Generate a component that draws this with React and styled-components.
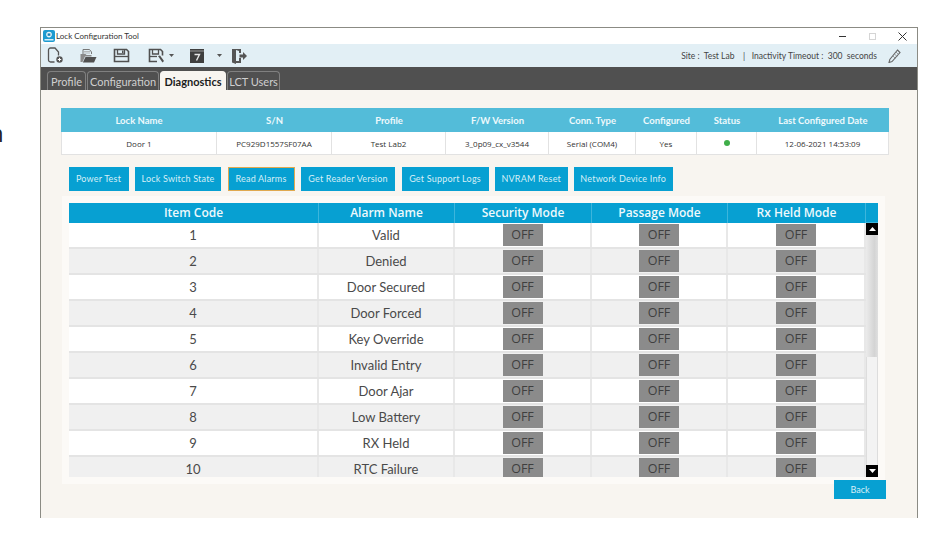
import React from 'react'
import styled, { createGlobalStyle } from 'styled-components'

const GlobalStyle = createGlobalStyle`
  html, body {
    margin: 0;
    background: #fff;
    font-family: "Open Sans", "Noto Sans", sans-serif;
  }
`

const Page = styled.div`
  position: relative;
  width: 951px;
  height: 542px;
  padding: 27px 0 0 40px;
  box-sizing: border-box;
  overflow: hidden;
`

const CutOffLetter = styled.span`
  position: absolute;
  left: -11px;
  top: 118px;
  font-size: 24px;
  line-height: 30px;
  color: #222;
`

const Window = styled.div`
  width: 878px;
  height: 491px;
  box-sizing: border-box;
  border: 1px solid #8b8b84;
  border-bottom: 0;
  display: flex;
  flex-direction: column;
`

const TitleBar = styled.div`
  height: 16px;
  display: flex;
  align-items: center;
  padding-left: 2px;
  background: #fff;
  font-family: Lato, sans-serif;
  font-size: 8px;
  color: #333;
`

const TitleText = styled.span`
  margin-left: 1px;
  flex: 1;
`

const WindowButton = styled.span`
  display: flex;
  justify-content: center;
  width: 30px;
  color: ${props => props.dim ? '#ccc' : '#333'};
`

const Toolbar = styled.div`
  height: 23px;
  display: flex;
  align-items: center;
  padding-left: 6px;
  background: #e2eff5;
`

const ToolIcon = styled.svg`
  display: block;
  flex: none;
  margin-right: ${props => props.gap || 0}px;
`

const SiteInfo = styled.div`
  margin-left: auto;
  display: flex;
  align-items: center;
  font-family: Lato, sans-serif;
  font-size: 8.5px;
  color: #444;
  white-space: pre;
`

const Pencil = styled.svg`
  display: block;
  margin: 0 16px 0 11px;
`

const TabBar = styled.div`
  height: 23px;
  display: flex;
  align-items: flex-end;
  padding-left: 6px;
  gap: 1px;
  background: #505050;
`

const Tab = styled.div`
  height: 19px;
  width: ${props => props.width}px;
  box-sizing: border-box;
  display: flex;
  align-items: center;
  justify-content: center;
  border: 1px solid ${props => props.active ? '#f8f5f0' : '#808080'};
  border-bottom: 0;
  border-radius: 4px 4px 0 0;
  background: ${props => props.active ? '#f8f5f0' : '#505050'};
  color: ${props => props.active ? '#1c1c1c' : '#cfcfcf'};
  font-family: Lato, sans-serif;
  font-size: 11px;
  font-weight: ${props => props.active ? 700 : 400};
  white-space: nowrap;
`

const Content = styled.div`
  flex: 1;
  padding: 18px 0 0 20px;
  background: #f8f5f0;
`

const InfoTable = styled.div`
  width: 828px;
  display: grid;
  grid-template-columns: 156px 115px 114px 103px 87px 61px 60px 132px;
`

const InfoHead = styled.div`
  height: 24px;
  display: flex;
  align-items: center;
  justify-content: center;
  background: #53bcd9;
  color: #eef9fc;
  font-family: Lato, sans-serif;
  font-size: 9.5px;
  font-weight: 700;
`

const InfoCell = styled.div`
  height: 23px;
  box-sizing: border-box;
  display: flex;
  align-items: center;
  justify-content: center;
  background: #fff;
  border-right: 1px solid #e2e2e2;
  border-bottom: 1px solid #e2e2e2;
  &:nth-child(9) {
    border-left: 1px solid #e2e2e2;
  }
  color: #333;
  font-size: 8px;
`

const StatusDot = styled.span`
  width: 6px;
  height: 6px;
  border-radius: 50%;
  background: #3fae49;
`

const ActionRow = styled.div`
  display: flex;
  gap: 6.5px;
  margin: 11.5px 0 0 7.5px;
`

const ActionButton = styled.button`
  height: 24px;
  width: ${props => props.width}px;
  padding: 0;
  box-sizing: border-box;
  background: #07a0d2;
  border: 1px solid ${props => props.active ? '#e0a94f' : '#07a0d2'};
  border-radius: 0;
  color: #d6eff7;
  font-family: Lato, sans-serif;
  font-size: 9px;
  letter-spacing: 0.2px;
  white-space: nowrap;
`

const AlarmPanel = styled.div`
  margin: 12px 0 0 8px;
  width: 809px;
  height: 274px;
  display: flex;
  overflow: hidden;
  box-shadow: 0 0 0 7px #fcfaf7;
`

const AlarmTable = styled.div`
  width: 797px;
`

const AlarmRow = styled.div`
  display: grid;
  grid-template-columns: 250px 136px 137px 136px 138px;
  height: ${props => props.head ? 20 : 26}px;
  box-sizing: border-box;
  background: ${props => props.head ? '#07a0d2' : props.shaded ? '#f0f0f0' : '#fff'};
  border-bottom: ${props => props.head ? 0 : '2px solid #e4e4e4'};
`

const AlarmHead = styled.div`
  display: flex;
  align-items: center;
  justify-content: center;
  border-right: 1px solid #3db5dc;
  color: #eef9fc;
  font-size: 12px;
  font-weight: 600;
`

const AlarmCell = styled.div`
  display: flex;
  align-items: center;
  justify-content: center;
  border-right: 2px solid #e8e8e8;
  color: #4a4a4a;
  font-family: Lato, sans-serif;
  font-size: 13px;
`

const OffBadge = styled.span`
  width: 40px;
  height: 22px;
  display: flex;
  align-items: center;
  justify-content: center;
  background: #8b8b8b;
  color: #3f3f3f;
  font-family: "Open Sans", sans-serif;
  font-size: 12.5px;
`

const ScrollBar = styled.div`
  width: 13px;
  display: flex;
  flex-direction: column;
  height: 274px;
`

const ScrollCap = styled.div`
  height: 20px;
  background: #07a0d2;
  border-bottom: 1px solid #3db5dc;
  box-sizing: border-box;
`

const ScrollArrow = styled.div`
  height: 12px;
  display: flex;
  align-items: center;
  justify-content: center;
  background: #000;
  color: #fff;
`

const ScrollThumb = styled.div`
  height: 122px;
  background: linear-gradient(90deg, #ebebeb, #d4d4d4 70%, #dfdfdf);
`

const ScrollTrack = styled.div`
  flex: 1;
  background: #f3f3f3;
  border-left: 1px solid #ddd;
  border-right: 1px solid #ddd;
`

const BackRow = styled.div`
  display: flex;
  justify-content: flex-end;
  width: 825px;
  margin-top: 3px;
`

const BackButton = styled.button`
  width: 52px;
  height: 19px;
  padding: 0;
  background: #07a0d2;
  border: 0;
  color: #d6eff7;
  font-family: Lato, sans-serif;
  font-size: 9px;
`

const infoColumns = ['Lock Name', 'S/N', 'Profile', 'F/W Version', 'Conn. Type', 'Configured', 'Status', 'Last Configured Date']
const infoValues = ['Door 1', 'PC929D1557SF07AA', 'Test Lab2', '3_0p09_cx_v3544', 'Serial (COM4)', 'Yes', null, '12-06-2021 14:53:09']
const actions = [
  ['Power Test', 60],
  ['Lock Switch State', 86],
  ['Read Alarms', 67],
  ['Get Reader Version', 94],
  ['Get Support Logs', 87],
  ['NVRAM Reset', 72.5],
  ['Network Device Info', 98.5],
]
const alarmColumns = ['Item Code', 'Alarm Name', 'Security Mode', 'Passage Mode', 'Rx Held Mode']
const alarms = ['Valid', 'Denied', 'Door Secured', 'Door Forced', 'Key Override', 'Invalid Entry', 'Door Ajar', 'Low Battery', 'RX Held', 'RTC Failure']

const Logo = () => (
  <ToolIcon width="12" height="12" viewBox="0 0 12 12" aria-hidden="true">
    <rect width="12" height="12" rx="2" fill="#1c9ad0" />
    <circle cx="6" cy="4.6" r="2.8" fill="#e8f6fb" />
    <rect x="4.6" y="3.4" width="2.8" height="2.4" fill="#1c7fb0" />
    <rect x="1.5" y="9" width="9" height="1.5" fill="#d3eef8" />
  </ToolIcon>
)

const NewIcon = () => (
  <ToolIcon width="17" height="17" viewBox="0 0 17 17" gap={16} aria-hidden="true">
    <path d="M7.500 15H3.500a2 2 0 0 1-2-2V3a2 2 0 0 1 2-2h4.500l3.500 4v3.500" fill="none" stroke="#555" strokeWidth="1.300" />
    <circle cx="12.500" cy="12.500" r="3.200" fill="#555" />
    <path d="M10.800 12.500h3.400M12.500 10.800v3.400" stroke="#fff" strokeWidth="1" />
  </ToolIcon>
)

const OpenIcon = () => (
  <ToolIcon width="17" height="17" viewBox="0 0 17 17" gap={16} aria-hidden="true">
    <path d="M3 7V2.500h6.500L11.500 5v2" fill="none" stroke="#777" strokeWidth="1" />
    <path d="M4 4.500h6M4 6h6" stroke="#aaa" strokeWidth="0.8" />
    <path d="M.5 7h5l1 1h5v1.500H5L2.500 15H.5z" fill="#8a8a8a" />
    <path d="M5.500 10h11L14 15.500H2.800z" fill="#505050" />
  </ToolIcon>
)

const SaveIcon = () => (
  <ToolIcon width="17" height="17" viewBox="0 0 17 17" gap={18} aria-hidden="true">
    <path d="M1.500 2.500h12l2 2v10h-14z" fill="none" stroke="#505050" strokeWidth="1.600" />
    <path d="M4.500 3v4h7V3" fill="none" stroke="#505050" strokeWidth="1.300" />
    <path d="M9 3.500h1.500v2.500H9z" fill="#505050" />
    <path d="M2 9.500h13" stroke="#505050" strokeWidth="1.300" />
  </ToolIcon>
)

const SaveAsIcon = () => (
  <ToolIcon width="17" height="17" viewBox="0 0 17 17" gap={4} aria-hidden="true">
    <path d="M9 14.500H1.500v-12h11l2 2v4" fill="none" stroke="#505050" strokeWidth="1.600" />
    <path d="M4.500 3v4h6V3" fill="none" stroke="#505050" strokeWidth="1.300" />
    <path d="M2 9.500h7" stroke="#505050" strokeWidth="1.300" />
    <path d="M10 9l2-.5L16 14l-1.500 1.500z" fill="#505050" />
  </ToolIcon>
)

const DropArrow = ({ gap }) => (
  <ToolIcon width="5" height="3" viewBox="0 0 5 3" gap={gap} aria-hidden="true">
    <path d="M0 0h5L2.500 3z" fill="#555" />
  </ToolIcon>
)

const HelpIcon = () => (
  <ToolIcon width="14" height="14" viewBox="0 0 14 14" gap={13} aria-hidden="true">
    <rect width="14" height="14" fill="#3f3f3f" />
    <rect y="1.500" width="14" height="1" fill="#9a9a9a" />
    <path d="M4.500 5.500h5L6.500 11.500" fill="none" stroke="#e6e6e6" strokeWidth="1.400" />
  </ToolIcon>
)

const ExitIcon = () => (
  <ToolIcon width="16" height="16" viewBox="0 0 16 16" aria-hidden="true">
    <path d="M1 1h9v4H8V3L5 2v11h3v-3h2v5H5v1l-4-1.500z" fill="#555" />
    <path d="M8.500 6.500H12V4l4 4-4 4V9.500H8.500z" fill="#555" />
  </ToolIcon>
)

const CloseGlyph = () => (
  <svg width="9" height="9" viewBox="0 0 9 9" aria-hidden="true">
    <path d="M.5.5l8 8M8.500.5l-8 8" stroke="#333" strokeWidth="1" />
  </svg>
)

const MinGlyph = () => (
  <svg width="9" height="9" viewBox="0 0 9 9" aria-hidden="true">
    <path d="M1 4.500h7" stroke="#333" strokeWidth="1" />
  </svg>
)

const MaxGlyph = () => (
  <svg width="7" height="7" viewBox="0 0 7 7" aria-hidden="true">
    <rect x=".5" y=".5" width="6" height="6" fill="none" stroke="#d5d5d5" />
  </svg>
)

const App = () => (
  <Page>
    <GlobalStyle />
    <CutOffLetter>n</CutOffLetter>
    <Window>
      <TitleBar>
        <Logo />
        <TitleText>Lock Configuration Tool</TitleText>
        <WindowButton><MinGlyph /></WindowButton>
        <WindowButton dim><MaxGlyph /></WindowButton>
        <WindowButton><CloseGlyph /></WindowButton>
      </TitleBar>
      <Toolbar>
        <NewIcon />
        <OpenIcon />
        <SaveIcon />
        <SaveAsIcon />
        <DropArrow gap={16} />
        <HelpIcon />
        <DropArrow gap={9} />
        <ExitIcon />
        <SiteInfo>
          Site :  Test Lab    |   Inactivity Timeout :  300  seconds
          <Pencil width="13" height="14" viewBox="0 0 13 14" aria-hidden="true">
            <path d="M9.500 1L12 3.500 4 12.500 1 13.500l.8-3z" fill="none" stroke="#666" strokeWidth="1.100" />
            <path d="M8 3l2.500 2.500M6.500 5L9 7.500M5 7l2.500 2.500" stroke="#888" strokeWidth="0.800" />
          </Pencil>
        </SiteInfo>
      </Toolbar>
      <TabBar>
        <Tab width={39}>Profile</Tab>
        <Tab width={72}>Configuration</Tab>
        <Tab width={66} active>Diagnostics</Tab>
        <Tab width={53}>LCT Users</Tab>
      </TabBar>
      <Content>
        <InfoTable>
          {infoColumns.map(name => <InfoHead key={name}>{name}</InfoHead>)}
          {infoValues.map((value, i) => (
            <InfoCell key={i}>{value || <StatusDot />}</InfoCell>
          ))}
        </InfoTable>
        <ActionRow>
          {actions.map(([label, width]) => (
            <ActionButton key={label} width={width} active={label === 'Read Alarms'}>{label}</ActionButton>
          ))}
        </ActionRow>
        <AlarmPanel>
          <AlarmTable>
            <AlarmRow head>
              {alarmColumns.map(name => <AlarmHead key={name}>{name}</AlarmHead>)}
            </AlarmRow>
            {alarms.map((name, i) => (
              <AlarmRow key={name} shaded={i % 2 === 1}>
                <AlarmCell>{i + 1}</AlarmCell>
                <AlarmCell>{name}</AlarmCell>
                <AlarmCell><OffBadge>OFF</OffBadge></AlarmCell>
                <AlarmCell><OffBadge>OFF</OffBadge></AlarmCell>
                <AlarmCell><OffBadge>OFF</OffBadge></AlarmCell>
              </AlarmRow>
            ))}
          </AlarmTable>
          <ScrollBar>
            <ScrollCap />
            <ScrollArrow>
              <svg width="7" height="4" viewBox="0 0 7 4" aria-hidden="true"><path d="M3.500 0L7 4H0z" fill="#fff" /></svg>
            </ScrollArrow>
            <ScrollThumb />
            <ScrollTrack />
            <ScrollArrow>
              <svg width="7" height="4" viewBox="0 0 7 4" aria-hidden="true"><path d="M0 0h7L3.500 4z" fill="#fff" /></svg>
            </ScrollArrow>
          </ScrollBar>
        </AlarmPanel>
        <BackRow>
          <BackButton>Back</BackButton>
        </BackRow>
      </Content>
    </Window>
  </Page>
)

export default App
